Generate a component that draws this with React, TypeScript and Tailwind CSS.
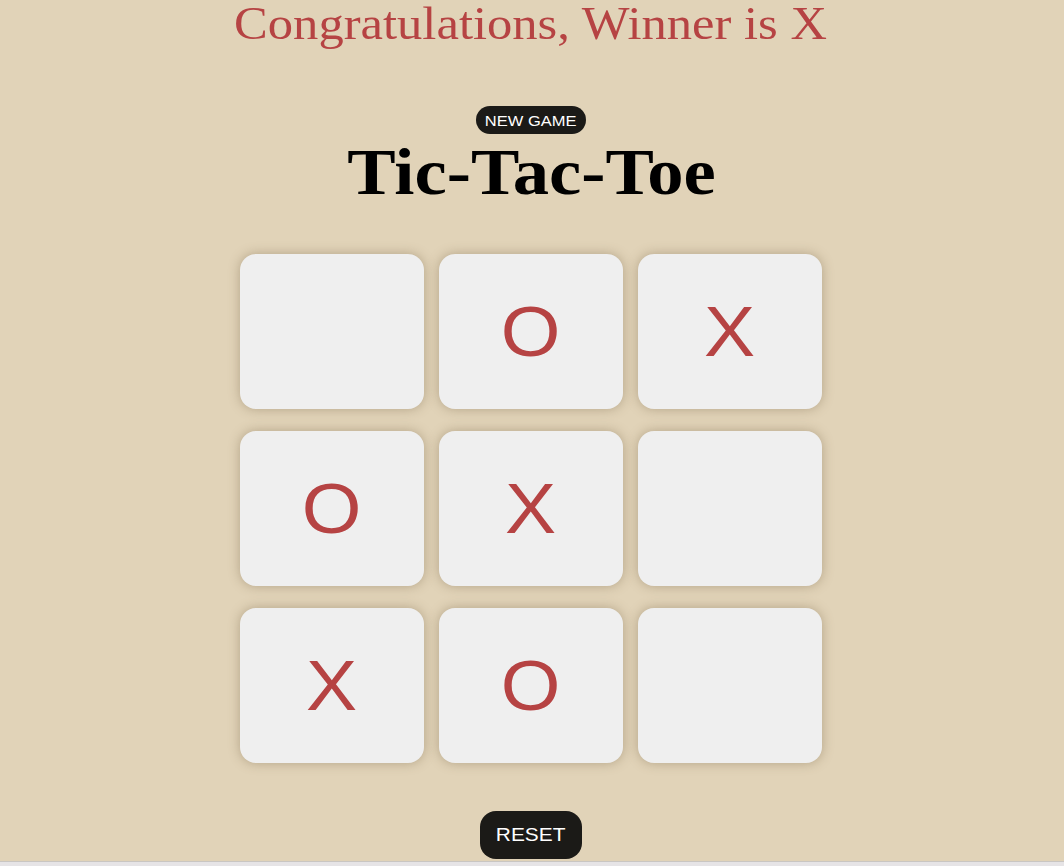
import React from "react"

const board = ["", "O", "X", "O", "X", "", "X", "O", ""]

const sans = { fontFamily: '"Liberation Sans", Arial, sans-serif' }
const serif = { fontFamily: '"Liberation Serif", "Times New Roman", serif' }

function Cell({ value }: { value: string }) {
  return (
    <div className="flex h-[155px] w-[184px] items-center justify-center rounded-2xl bg-[#efefef] shadow-[0_0_12px_rgba(110,90,60,0.4)]">
      <span className="inline-block scale-x-[1.08] text-[71px] leading-none text-[#b64343]" style={sans}>
        {value}
      </span>
    </div>
  )
}

export default function App() {
  return (
    <div className="flex min-h-[866px] w-full flex-col overflow-hidden bg-[#e1d3b8]">
      <div className="flex h-[861px] flex-col items-center pr-[2px]">
        <h2 className="mt-[-2px] scale-x-[1.1] whitespace-nowrap text-[46px] leading-[52px] text-[#b64343]" style={serif}>
          Congratulations, Winner is X
        </h2>
        <button className="mt-[56px] h-[28px] w-[110px] rounded-full bg-[#1b1a17] text-white">
          <span className="inline-block scale-x-[1.1] text-[15px]" style={sans}>NEW GAME</span>
        </button>
        <h1 className="mt-[2px] scale-x-[1.1] whitespace-nowrap text-[66px] font-bold leading-[72px] text-black" style={serif}>
          Tic-Tac-Toe
        </h1>
        <div className="mt-[46px] grid grid-cols-3 gap-x-[15px] gap-y-[22px]">
          {board.map((v, i) => (
            <Cell key={i} value={v} />
          ))}
        </div>
        <button className="mt-[48px] h-[48px] w-[102px] rounded-2xl bg-[#1b1a17] text-white">
          <span className="inline-block scale-x-[1.1] text-[19px]" style={sans}>RESET</span>
        </button>
      </div>
      <div className="h-[5px] border-t border-[#c9c6c2] bg-[#e6e4e6]" />
    </div>
  )
}
